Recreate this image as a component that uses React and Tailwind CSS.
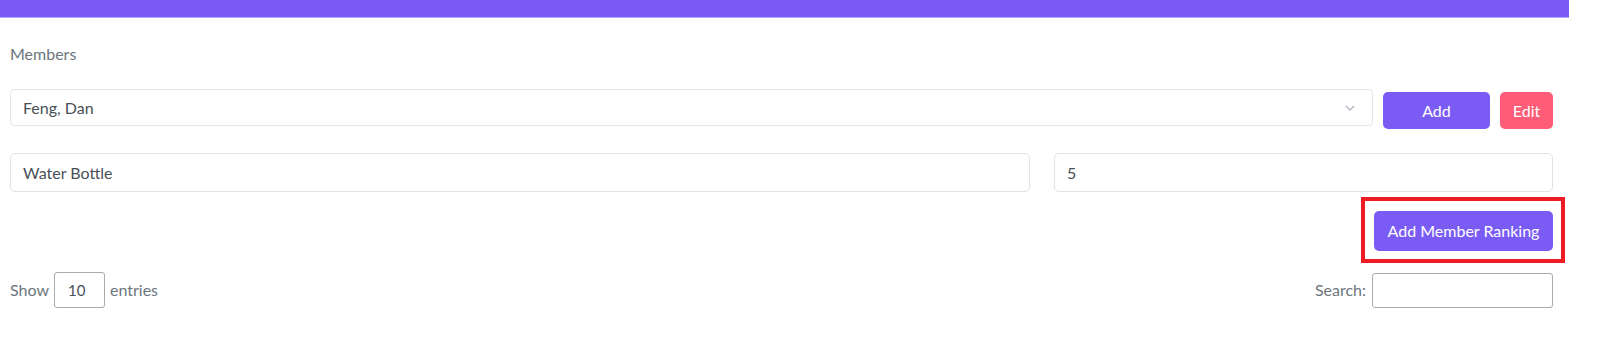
export default function App() {
  const font = { fontFamily: '"Lato", "Open Sans", sans-serif' };
  return (
    <div className="w-[1600px] h-[350px] bg-white" style={font}>
      <div className="w-[1569px]">
        {/* top bar */}
        <div className="h-[18px] bg-[#7a5af5] border-b border-[#b9a8fa]" />

        <div className="pl-[10px] pr-[16px]">
          <div className="pt-[27px] text-[16px] leading-[18px] text-[#6c757d]">Members</div>

          {/* member select + buttons */}
          <div className="mt-[26px] flex items-start gap-[10px]">
            <div className="flex-1 h-[37px] border border-[#e4e6ef] rounded-[4px] flex items-center justify-between pl-[12px] pr-[16px] text-[16px] text-[#495057]">
              <span>Feng, Dan</span>
              <svg width="12" height="12" viewBox="0 0 12 12" fill="none" stroke="#b5b9c4" strokeWidth="1.5">
                <path d="M2 4l4 4 4-4" />
              </svg>
            </div>
            <button className="mt-[3px] w-[107px] h-[37px] bg-[#7a5cf5] rounded-[5px] text-white text-[16px]">Add</button>
            <button className="mt-[3px] w-[53px] h-[37px] bg-[#fe5c77] rounded-[5px] text-white text-[16px]">Edit</button>
          </div>

          {/* item + quantity */}
          <div className="mt-[24px] flex gap-[24px]">
            <div className="w-[1020px] h-[39px] border border-[#dfe2e6] rounded-[5px] flex items-center pl-[12px] text-[16px] text-[#495057]">
              Water Bottle
            </div>
            <div className="flex-1 h-[39px] border border-[#dfe2e6] rounded-[5px] flex items-center pl-[12px] text-[16px] text-[#495057]">
              5
            </div>
          </div>

          {/* add ranking */}
          <div className="mt-[19px] flex justify-end">
            <div className="relative">
              <button className="w-[179px] h-[40px] bg-[#7a5cf5] rounded-[5px] text-white text-[16px]">Add Member Ranking</button>
              <span className="absolute -left-[13px] -right-[12px] -top-[14px] -bottom-[12px] border-[4px] border-[#ee1c25] pointer-events-none" />
            </div>
          </div>

          {/* table controls */}
          <div className="mt-[21px] flex items-center justify-between text-[16px] text-[#6c757d]">
            <div className="flex items-center">
              <span>Show</span>
              <div className="ml-[5px] w-[51px] h-[36px] border border-[#aaaaaa] rounded-[3px] flex items-center pl-[13px] text-[15px] text-[#495057]">10</div>
              <span className="ml-[5px]">entries</span>
            </div>
            <div className="flex items-center">
              <span>Search:</span>
              <div className="ml-[6px] w-[181px] h-[35px] border border-[#aaaaaa] rounded-[3px]" />
            </div>
          </div>
        </div>
      </div>
    </div>
  );
}
